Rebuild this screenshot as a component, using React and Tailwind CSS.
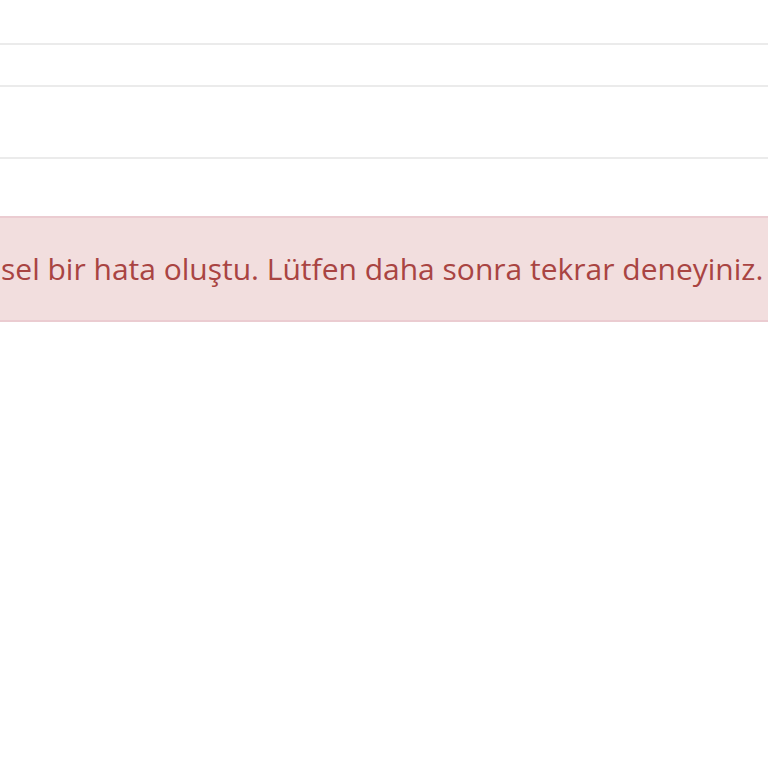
export default function App() {
  return (
    <div className="w-[768px] h-[768px] bg-white overflow-hidden" style={{ fontFamily: '"Open Sans", "Noto Sans", sans-serif' }}>
      <div className="h-[43px]" />
      <div className="h-[2px] bg-[#ebebeb]" />
      <div className="h-[40px]" />
      <div className="h-[2px] bg-[#ebebeb]" />
      <div className="h-[70px]" />
      <div className="h-[2px] bg-[#ebebeb]" />
      <div className="h-[57px]" />
      <div className="h-[106px] bg-[#f2dede] border-y-2 border-[#ebccd1] flex items-center overflow-hidden">
        <span className="whitespace-nowrap text-[30px] text-[#a94442] leading-none ml-[1px]">
          sel bir hata oluştu. Lütfen daha sonra tekrar deneyiniz.
        </span>
      </div>
    </div>
  );
}
